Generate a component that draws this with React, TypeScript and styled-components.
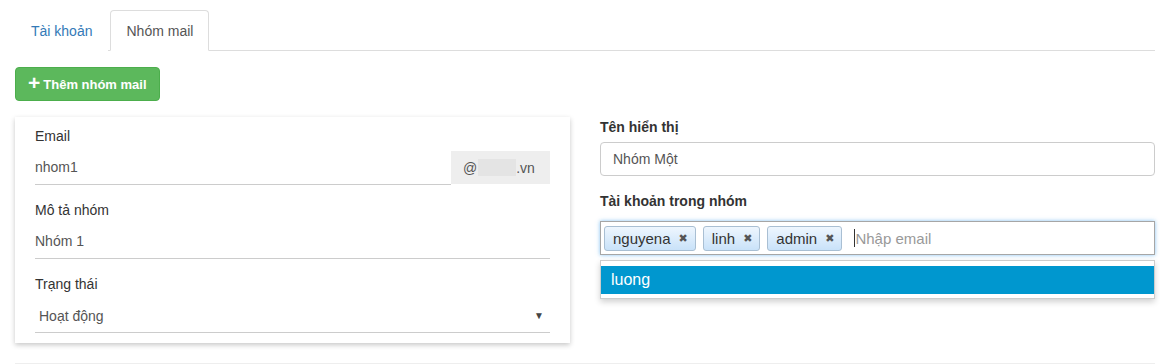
import { styled, createGlobalStyle } from "styled-components"

const GlobalStyle = createGlobalStyle`
  body {
    margin: 0;
    background: #fff;
    font-family: "Liberation Sans", Arial, sans-serif;
    font-size: 14px;
    color: #333;
  }
  * { box-sizing: border-box; }
`

const tags = ["nguyena", "linh", "admin"]

const App = () => {
  return (
    <>
      <GlobalStyle />
      <Page>
        <Tabs>
          <Tab>Tài khoản</Tab>
          <Tab $active>Nhóm mail</Tab>
        </Tabs>
        <AddButton>
          <Plus>+</Plus> Thêm nhóm mail
        </AddButton>
        <Row>
          <Column>
            <Card>
              <Group>
                <CardLabel>Email</CardLabel>
                <InputRow>
                  <LineInput>nhom1</LineInput>
                  <Addon>
                    @<Redacted />.vn
                  </Addon>
                </InputRow>
              </Group>
              <Group>
                <CardLabel>Mô tả nhóm</CardLabel>
                <LineInput>Nhóm 1</LineInput>
              </Group>
              <Group $last>
                <CardLabel>Trạng thái</CardLabel>
                <SelectBox>
                  <span>Hoạt động</span>
                  <Caret>▼</Caret>
                </SelectBox>
              </Group>
            </Card>
          </Column>
          <Column>
            <Group>
              <BoldLabel>Tên hiển thị</BoldLabel>
              <BoxInput>Nhóm Một</BoxInput>
            </Group>
            <Group $last>
              <BoldLabel>Tài khoản trong nhóm</BoldLabel>
              <TagField>
                <TagBox>
                  {tags.map((t) => (
                    <Tag key={t}>
                      {t}
                      <TagClose>✖</TagClose>
                    </Tag>
                  ))}
                  <TextCursor />
                  <Placeholder>Nhập email</Placeholder>
                </TagBox>
                <Dropdown>
                  <Option $selected>luong</Option>
                </Dropdown>
              </TagField>
            </Group>
          </Column>
        </Row>
        <Divider />
      </Page>
    </>
  )
}

export default App

const Page = styled.div`
  padding: 10px 5px 0 15px;
  width: 1160px;
`
const Tabs = styled.div`
  display: flex;
  border-bottom: 1px solid #ddd;
  height: 41px;
`
const Tab = styled.div<{ $active?: boolean }>`
  padding: 10px 15px;
  line-height: 20px;
  margin-right: 2px;
  height: 41px;
  border: 1px solid ${(p) => (p.$active ? "#ddd" : "transparent")};
  border-bottom-color: ${(p) => (p.$active ? "#fff" : "transparent")};
  border-radius: 4px 4px 0 0;
  background: #fff;
  color: ${(p) => (p.$active ? "#555" : "#337ab7")};
  cursor: pointer;
`
const AddButton = styled.button`
  margin-top: 16px;
  height: 34px;
  padding: 6px 12px;
  background: #5cb85c;
  border: 1px solid #4cae4c;
  border-radius: 4px;
  color: #fff;
  font-family: "Liberation Sans", Arial, sans-serif;
  font-weight: bold;
  font-size: 13px;
  display: flex;
  align-items: center;
  gap: 3px;
  cursor: pointer;
`
const Plus = styled.span`
  font-size: 21px;
  line-height: 14px;
  font-weight: bold;
  margin-top: -2px;
`
const Row = styled.div`
  display: grid;
  grid-template-columns: 555px 555px;
  column-gap: 30px;
  margin-top: 16px;
`
const Column = styled.div``
const Card = styled.div`
  background: #fff;
  padding: 9px 20px 10px;
  box-shadow: 0 2px 5px rgba(0, 0, 0, 0.22);
`
const Group = styled.div<{ $last?: boolean }>`
  margin-bottom: ${(p) => (p.$last ? 0 : 15)}px;
`
const CardLabel = styled.div`
  line-height: 20px;
  margin-bottom: 5px;
  color: #333;
`
const BoldLabel = styled.div`
  line-height: 20px;
  margin-bottom: 5px;
  font-weight: bold;
  color: #333;
`
const InputRow = styled.div`
  display: flex;
  align-items: stretch;
`
const LineInput = styled.div`
  flex: 1;
  height: 34px;
  line-height: 33px;
  border-bottom: 1px solid #ccc;
  color: #555;
`
const Addon = styled.div`
  width: 99px;
  height: 33px;
  background: #eee;
  color: #555;
  padding: 0 12px;
  display: flex;
  align-items: center;
`
const Redacted = styled.span`
  display: inline-block;
  width: 38px;
  height: 17px;
  background: #e4e4e4;
  margin-left: 1px;
`
const SelectBox = styled.div`
  height: 34px;
  border-bottom: 1px solid #ccc;
  color: #555;
  display: flex;
  align-items: center;
  justify-content: space-between;
  padding: 0 6px 0 4px;
`
const Caret = styled.span`
  font-size: 10px;
  color: #444;
`
const BoxInput = styled.div`
  height: 34px;
  border: 1px solid #ccc;
  border-radius: 4px;
  padding: 6px 12px;
  line-height: 20px;
  color: #555;
`
const TagField = styled.div`
  position: relative;
  margin-top: 10px;
`
const TagBox = styled.div`
  height: 34px;
  border: 1px solid #a6a6a6;
  box-shadow: 0 0 4px rgba(82, 168, 236, 0.7);
  display: flex;
  align-items: center;
  padding: 0 3px;
  gap: 7px;
  background: #fff;
`
const Tag = styled.div`
  height: 25px;
  display: flex;
  align-items: center;
  padding: 0 7px 0 8px;
  border: 1px solid #a9bfd3;
  border-radius: 3px;
  background: linear-gradient(to bottom, #eef6fe 0%, #c9e2f9 100%);
  color: #333;
  font-size: 15px;
`
const TagClose = styled.span`
  margin-left: 8px;
  font-family: "DejaVu Sans", sans-serif;
  font-size: 11px;
  color: #555;
`
const TextCursor = styled.span`
  width: 1px;
  height: 18px;
  background: #333;
  margin-left: 5px;
  margin-right: -7px;
`
const Placeholder = styled.span`
  color: #999;
  font-size: 15px;
`
const Dropdown = styled.div`
  position: absolute;
  top: 39px;
  left: 0;
  right: 0;
  background: #fff;
  border: 1px solid #ccc;
  padding: 5px 0 4px;
  box-shadow: 0 3px 6px rgba(0, 0, 0, 0.18);
`
const Option = styled.div<{ $selected?: boolean }>`
  height: 28px;
  line-height: 28px;
  padding: 0 10px;
  font-size: 16px;
  background: ${(p) => (p.$selected ? "#0097cf" : "#fff")};
  color: ${(p) => (p.$selected ? "#fff" : "#333")};
`
const Divider = styled.div`
  margin-top: 20px;
  border-top: 1px solid #eee;
`
